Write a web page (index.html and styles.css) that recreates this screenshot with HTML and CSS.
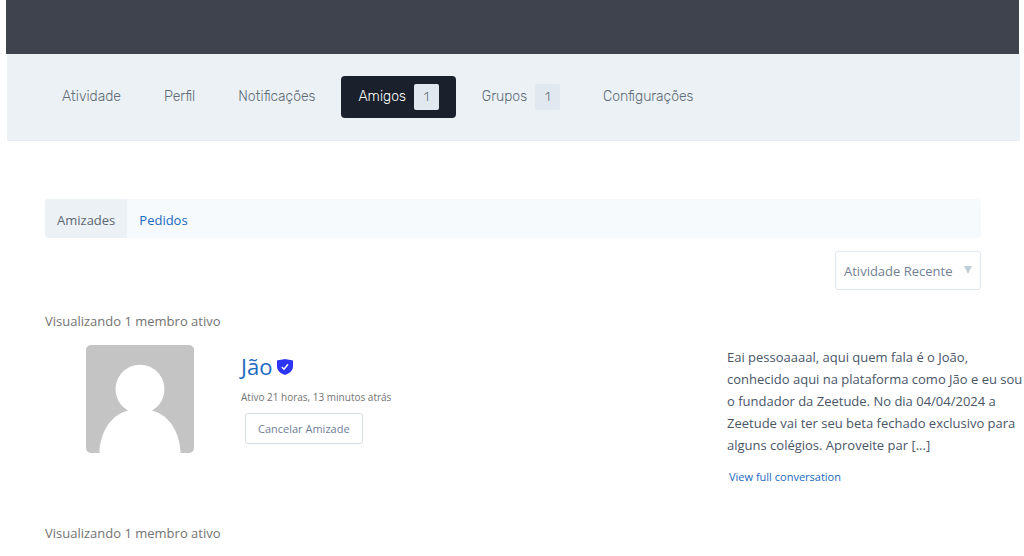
FILE: index.html
```html
<!DOCTYPE html>
<html lang="pt-BR">
<head>
    <meta charset="UTF-8">
    <meta name="viewport" content="width=device-width, initial-scale=1.0">
    <title>Amigos</title>
    <link rel="stylesheet" href="styles.css">
</head>
<body>

    <header class="cover"></header>

    <nav class="main-nav">
        <a href="#">Atividade</a>
        <a href="#">Perfil</a>
        <a href="#">Notificações</a>
        <a href="#" class="active">Amigos <span class="count">1</span></a>
        <a href="#">Grupos <span class="count">1</span></a>
        <a href="#">Configurações</a>
    </nav>

    <main class="content">
        <nav class="sub-nav">
            <a href="#" class="current">Amizades</a>
            <a href="#">Pedidos</a>
        </nav>

        <form class="filter">
            <select id="order" aria-label="Ordenar por">
                <option>Atividade Recente</option>
            </select>
            <span class="arrow"></span>
        </form>

        <p class="pag-count">Visualizando 1 membro ativo</p>

        <div class="member">
            <svg class="avatar" viewBox="0 0 108 108">
                <rect width="108" height="108" fill="#c4c4c4"/>
                <path d="M13.500 108C14 87 25 70 42 65.500A24.500 24.500 0 1 1 66 65.500C83 70 94 87 94.500 108Z" fill="#fff"/>
            </svg>

            <div class="member-info">
                <h2>
                    <a href="#">Jão</a>
                    <svg class="verified" viewBox="0 0 16 16">
                        <path d="M0 2.200Q0 1.500 .8 1.300L7 .2Q8 0 9 .2L15.200 1.300Q16 1.500 16 2.200V7.500C16 11.500 12.500 14.500 8 16C3.500 14.500 0 11.500 0 7.500Z" fill="#2c35f5"/>
                        <path d="M4.800 8L7 10.200L11 5.200" fill="none" stroke="#fff" stroke-width="1.400"/>
                    </svg>
                </h2>
                <p class="last-activity">Ativo 21 horas, 13 minutos atrás</p>
                <button type="button">Cancelar Amizade</button>
            </div>

            <div class="member-update">
                <p>Eai pessoaaaal, aqui quem fala é o João, conhecido aqui na plataforma como Jão e eu sou o fundador da Zeetude. No dia 04/04/2024 a Zeetude vai ter seu beta fechado exclusivo para alguns colégios. Aproveite par [...]</p>
                <a href="#">View full conversation</a>
            </div>
        </div>

        <p class="pag-count">Visualizando 1 membro ativo</p>
    </main>

</body>
</html>
```

FILE: styles.css
```css
body {
    font-family: "Segoe UI", "Open Sans", sans-serif;
    font-size: 13px;
    line-height: 22px;
    color: #737373;
    background-color: #fff;
    margin: 0;
}

a {
    color: #2069c0;
    text-decoration: none;
}

p, h2 {
    margin: 0;
}

.cover {
    height: 54px;
    margin: 0 5px 0 6px;
    background-color: #3f434d;
}

.main-nav {
    display: flex;
    align-items: center;
    gap: 9px;
    height: 42px;
    margin: 0 4px 0 7px;
    padding: 22px 38px;
    background-color: #ebf1f5;
    border-bottom: 1px solid #e7edf2;
    font-family: Rubik, Roboto, sans-serif;
    font-size: 14px;
    font-weight: 300;
}

.main-nav a {
    display: flex;
    align-items: center;
    gap: 8px;
    height: 42px;
    padding: 0 17px;
    border-radius: 4px;
    color: #5f6b76;
}

.main-nav .active {
    background-color: #1a202c;
    color: #fff;
}

.count {
    width: 25px;
    height: 26px;
    line-height: 26px;
    border-radius: 2px;
    background-color: #e1e8f0;
    color: #5f6b76;
    font-size: 13px;
    text-align: center;
}

.content {
    padding: 58px 0 0 45px;
}

.sub-nav {
    display: flex;
    margin-right: 43px;
    background-color: #f6fafd;
    border-radius: 4px;
    overflow: hidden;
    line-height: 36px;
}

.sub-nav a {
    padding: 3px 12px 0;
}

.sub-nav .current {
    background-color: #ebf1f5;
    color: #5f6872;
}

.filter {
    position: relative;
    width: 146px;
    margin: 13px 43px 20px auto;
}

.filter select {
    display: block;
    width: 100%;
    height: 39px;
    padding: 0 8px;
    appearance: none;
    background-color: #fff;
    border: 1px solid #e2e8f0;
    border-radius: 3px;
    font: inherit;
    color: #718096;
}

.arrow {
    position: absolute;
    top: 15px;
    right: 9px;
    border: 4px solid transparent;
    border-top: 8px solid #c3cdd6;
    border-bottom: 0;
    pointer-events: none;
}

.member {
    display: flex;
    align-items: flex-start;
    margin: 13px 0 24px;
    padding-left: 41px;
}

.avatar {
    flex: none;
    width: 108px;
    height: 108px;
    border-radius: 5px;
}

.member-info {
    flex: 1;
    padding: 7px 0 0 47px;
}

.member-info h2 {
    display: flex;
    align-items: center;
    gap: 5px;
    font-size: 22px;
    font-weight: 400;
    line-height: 28px;
}

.verified {
    width: 16px;
    height: 16px;
    padding-top: 2px;
}

.last-activity {
    margin-top: 6px;
    font-size: 10px;
}

.member-info button {
    height: 31px;
    margin: 5px 4px;
    padding: 0 12px;
    background-color: #fff;
    border: 1px solid #d5dde6;
    border-radius: 3px;
    font-family: inherit;
    font-size: 11px;
    color: #718096;
}

.member-update {
    width: 297px;
    padding-top: 1px;
    color: #4a5568;
}

.member-update a {
    display: block;
    margin: 10px 2px;
    font-size: 11px;
}
```
